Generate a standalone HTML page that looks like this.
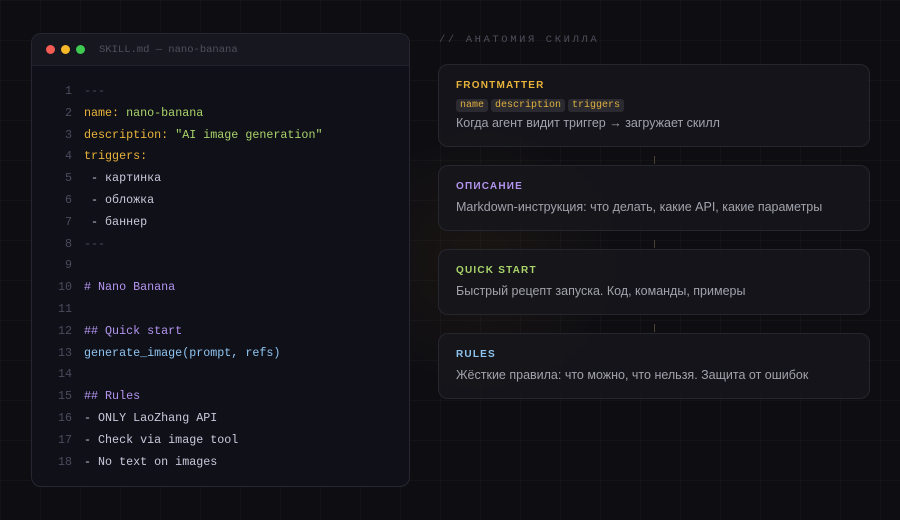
<!DOCTYPE html>
<html><head><meta charset="utf-8"><style>
*{margin:0;padding:0;box-sizing:border-box}
body{width:900px;height:520px;overflow:hidden;background:#0d0d12;position:relative;font-family:"Liberation Sans","DejaVu Sans",sans-serif;
background-image:linear-gradient(rgba(255,255,255,0.025) 1px,transparent 1px),linear-gradient(90deg,rgba(255,255,255,0.025) 1px,transparent 1px);background-size:40px 40px;}
.glow{position:absolute;left:330px;top:120px;width:300px;height:280px;background:radial-gradient(ellipse at center,rgba(120,80,20,0.12),transparent 70%)}
.win{position:absolute;left:31px;top:33px;width:379px;height:454px;background:#101018;border:1px solid #272732;border-radius:10px;overflow:hidden}
.tb{height:32px;background:#17171f;border-bottom:1px solid #22222c;display:flex;align-items:center;padding-left:14px}
.d{width:9px;height:9px;border-radius:50%;margin-right:6px}
.tt{font-family:"Liberation Mono",monospace;font-size:10.5px;color:#50505e;margin-left:8px}
.code{position:absolute;left:0;top:47px;font-family:"Liberation Mono",monospace;font-size:11.7px;line-height:21.8px;white-space:pre}
.ln{display:inline-block;width:40px;text-align:right;color:#4b4b5e;margin-right:12px}
.y{color:#e8b33a}.g{color:#a9d46a}.w{color:#c9c9dd}.p{color:#b395f0}.b{color:#8ec4f0}.m{color:#4b4b5e}
.hd{position:absolute;left:439px;top:34px;font-family:"Liberation Mono",monospace;font-size:10.5px;letter-spacing:2.6px;color:#4e4e5a}
.card{position:absolute;left:438px;width:432px;background:rgba(22,22,28,0.85);border:1px solid #26262e;border-radius:10px;padding:14px 17px}
.lab{font-size:10px;font-weight:bold;letter-spacing:1.2px;margin-top:1px}
.txt{font-size:12.5px;color:#a2a2ac;margin-top:8px}
.tags{margin-top:8px;display:flex;gap:3px}
.tag{font-family:"Liberation Mono",monospace;font-size:10px;color:#e0b040;background:#2a2a30;padding:1px 4px;border-radius:3px}
.con{position:absolute;left:654px;width:1px;height:8px;background:#4a4030}
</style></head><body>
<div class="glow"></div>
<div class="win">
<div class="tb"><div class="d" style="background:#f45b52"></div><div class="d" style="background:#f5b829"></div><div class="d" style="background:#3ec950"></div><span class="tt">SKILL.md — nano-banana</span></div>
<div class="code"><span class="ln">1</span><span class="m">---</span>
<span class="ln">2</span><span class="y">name:</span> <span class="g">nano-banana</span>
<span class="ln">3</span><span class="y">description:</span> <span class="g">"AI image generation"</span>
<span class="ln">4</span><span class="y">triggers:</span>
<span class="ln">5</span><span class="w"> - картинка</span>
<span class="ln">6</span><span class="w"> - обложка</span>
<span class="ln">7</span><span class="w"> - баннер</span>
<span class="ln">8</span><span class="m">---</span>
<span class="ln">9</span>
<span class="ln">10</span><span class="p"># Nano Banana</span>
<span class="ln">11</span>
<span class="ln">12</span><span class="p">## Quick start</span>
<span class="ln">13</span><span class="b">generate_image(prompt, refs)</span>
<span class="ln">14</span>
<span class="ln">15</span><span class="p">## Rules</span>
<span class="ln">16</span><span class="w">- ONLY LaoZhang API</span>
<span class="ln">17</span><span class="w">- Check via image tool</span>
<span class="ln">18</span><span class="w">- No text on images</span></div>
</div>
<div class="hd">// АНАТОМИЯ СКИЛЛА</div>
<div class="card" style="top:64px;height:83px"><div class="lab" style="color:#e8b33a">FRONTMATTER</div>
<div class="tags"><span class="tag">name</span><span class="tag">description</span><span class="tag">triggers</span></div>
<div class="txt" style="margin-top:4px">Когда агент видит триггер → загружает скилл</div></div>
<div class="con" style="top:156px"></div>
<div class="card" style="top:165px;height:66px"><div class="lab" style="color:#b395f0">ОПИСАНИЕ</div><div class="txt">Markdown-инструкция: что делать, какие API, какие параметры</div></div>
<div class="con" style="top:240px"></div>
<div class="card" style="top:249px;height:66px"><div class="lab" style="color:#a9d46a">QUICK START</div><div class="txt">Быстрый рецепт запуска. Код, команды, примеры</div></div>
<div class="con" style="top:324px"></div>
<div class="card" style="top:333px;height:66px"><div class="lab" style="color:#8ec4f0">RULES</div><div class="txt">Жёсткие правила: что можно, что нельзя. Защита от ошибок</div></div>
</body></html>
